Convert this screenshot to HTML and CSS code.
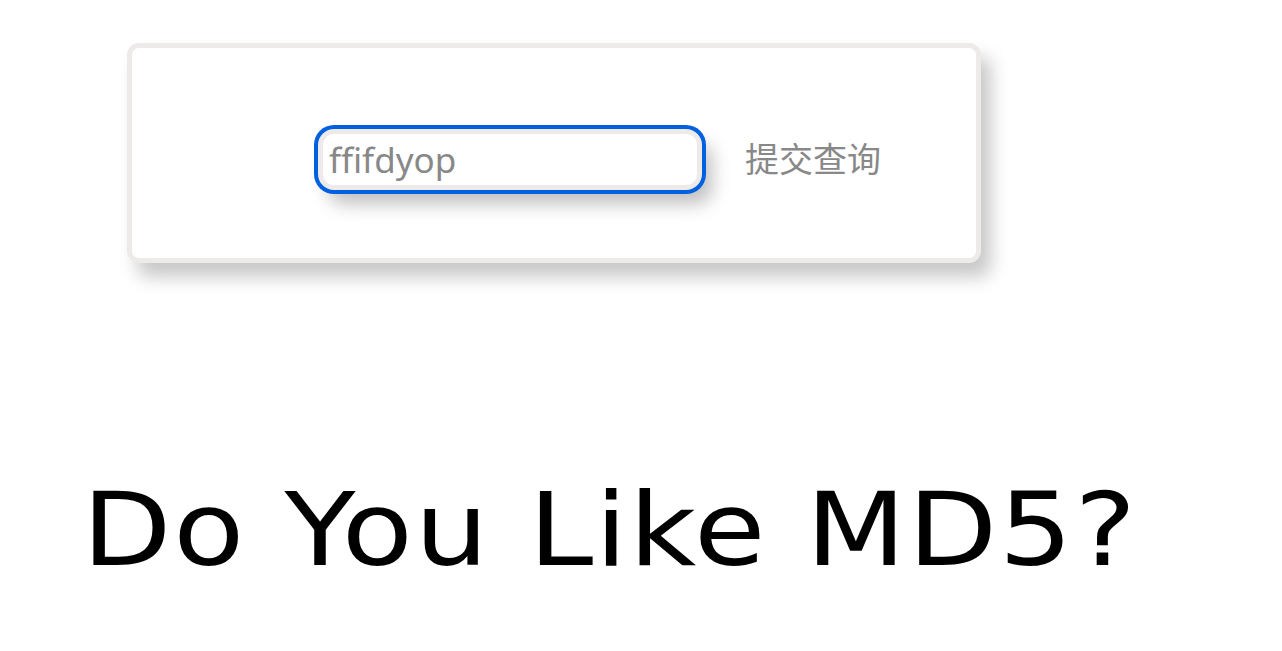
FILE: index.html
```html
<!DOCTYPE html>
<html lang="zh">
<head>
<meta charset="utf-8">
<title>Do You Like MD5?</title>
<link rel="stylesheet" href="styles.css">
</head>
<body>
<div class="page">
  <form class="card">
    <input class="query-input" type="text" name="password" value="ffifdyop">
    <button class="submit-btn" type="button">提交查询</button>
  </form>
  <h1 class="title">Do You Like MD5?</h1>
</div>
</body>
</html>
```

FILE: styles.css
```css
html, body {
  margin: 0;
  padding: 0;
  background: #ffffff;
}

.page {
  display: flex;
  flex-direction: column;
  align-items: flex-start;
  padding: 43px 0 0 0;
}

.card {
  box-sizing: border-box;
  width: 854px;
  height: 220px;
  margin: 0 0 0 127px;
  border: 5px solid #eeeaea;
  border-radius: 12px;
  background: #ffffff;
  box-shadow: 10px 14px 18px rgba(0, 0, 0, 0.22);
  display: flex;
  flex-direction: row;
  align-items: flex-start;
  padding: 81px 0 0 186px;
}

.query-input {
  box-sizing: border-box;
  width: 384px;
  height: 61px;
  margin: 0;
  border: 5px solid #eeeaea;
  border-radius: 16px;
  padding: 0 0 0 6px;
  background: #ffffff;
  color: #888888;
  font-family: "Noto Sans", "Noto Sans CJK SC", sans-serif;
  font-size: 35px;
  outline: none;
  box-shadow: 0 0 0 4px #0060df, 10px 14px 18px rgba(0, 0, 0, 0.25);
}

.submit-btn {
  box-sizing: border-box;
  height: 61px;
  margin: 0 0 0 30px;
  padding: 0 13px 4px 13px;
  border: none;
  border-radius: 12px;
  background: #ffffff;
  color: #888888;
  font-family: "Noto Sans CJK SC", "Noto Sans", sans-serif;
  font-size: 34px;
  line-height: 1;
  cursor: pointer;
}

.title {
  margin: 208px 0 0 82px;
  font-family: "DejaVu Sans", sans-serif;
  font-size: 101px;
  font-weight: normal;
  line-height: normal;
  letter-spacing: 1.5px;
  color: #000000;
  white-space: nowrap;
  transform: scaleX(1.15);
  transform-origin: left center;
}
```
